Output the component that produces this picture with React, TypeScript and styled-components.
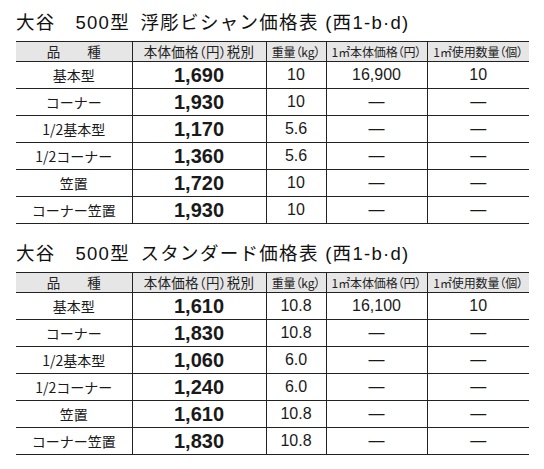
import styled, { createGlobalStyle } from "styled-components";

const GlobalStyle = createGlobalStyle`
  body {
    margin: 0;
    background: #ffffff;
    color: #1a1a1a;
    font-family: "Liberation Sans", "Noto Sans CJK JP", sans-serif;
  }
`;

type Row = {
  name: string;
  price: string;
  weight: string;
  m2Price: string;
  m2Count: string;
};

const relief: Row[] = [
  { name: "基本型", price: "1,690", weight: "10", m2Price: "16,900", m2Count: "10" },
  { name: "コーナー", price: "1,930", weight: "10", m2Price: "—", m2Count: "—" },
  { name: "1/2基本型", price: "1,170", weight: "5.6", m2Price: "—", m2Count: "—" },
  { name: "1/2コーナー", price: "1,360", weight: "5.6", m2Price: "—", m2Count: "—" },
  { name: "笠置", price: "1,720", weight: "10", m2Price: "—", m2Count: "—" },
  { name: "コーナー笠置", price: "1,930", weight: "10", m2Price: "—", m2Count: "—" },
];

const standard: Row[] = [
  { name: "基本型", price: "1,610", weight: "10.8", m2Price: "16,100", m2Count: "10" },
  { name: "コーナー", price: "1,830", weight: "10.8", m2Price: "—", m2Count: "—" },
  { name: "1/2基本型", price: "1,060", weight: "6.0", m2Price: "—", m2Count: "—" },
  { name: "1/2コーナー", price: "1,240", weight: "6.0", m2Price: "—", m2Count: "—" },
  { name: "笠置", price: "1,610", weight: "10.8", m2Price: "—", m2Count: "—" },
  { name: "コーナー笠置", price: "1,830", weight: "10.8", m2Price: "—", m2Count: "—" },
];

const Page = styled.div`
  display: flex;
  flex-direction: column;
  gap: 17px;
  padding: 10px 15px 0 16px;
`;

const Section = styled.section`
  display: flex;
  flex-direction: column;
`;

const Title = styled.h2`
  margin: 0;
  height: 31px;
  font-family: "Liberation Sans", "Noto Sans CJK JP", sans-serif;
  font-weight: 400;
  font-size: 18.5px;
  letter-spacing: 1.3px;
  line-height: 26px;
  color: #111;
  white-space: pre;
`;

const Table = styled.table`
  width: 513px;
  border-collapse: collapse;
  table-layout: fixed;
  border-top: 1.5px solid #222;
  border-bottom: 1px solid #222;
`;

const Head = styled.th<{ $tight?: boolean }>`
  height: 19px;
  padding: 0;
  background: #e6e6e6;
  font-family: "Noto Sans CJK JP", sans-serif;
  font-feature-settings: "palt";
  font-weight: 400;
  font-size: ${(p) => (p.$tight ? "12px" : "13.5px")};
  letter-spacing: ${(p) => (p.$tight ? "-0.1px" : "0.3px")};
  line-height: 19px;
  white-space: nowrap;
  text-align: center;
  color: #222;
  border-bottom: 1px solid #222;
  border-left: 1px solid #222;
  &:first-child {
    border-left: none;
    font-feature-settings: normal;
    letter-spacing: 0;
  }
`;

const Cell = styled.td<{ $kind?: "name" | "price" | "num" }>`
  height: 26px;
  padding: 0;
  text-align: center;
  white-space: nowrap;
  color: #1a1a1a;
  border-top: 1px solid #222;
  border-left: 1px solid #222;
  font-family: ${(p) =>
    p.$kind === "name"
      ? `"Noto Sans CJK JP", sans-serif`
      : `"Liberation Sans", Arial, sans-serif`};
  font-size: ${(p) => (p.$kind === "price" ? "20px" : p.$kind === "name" ? "14px" : "16px")};
  font-weight: ${(p) => (p.$kind === "price" ? 700 : 400)};
  line-height: 26px;
  &:first-child {
    border-left: none;
  }
`;

const PriceTable = ({ title, rows }: { title: string; rows: Row[] }) => (
  <Section>
    <Title>{title}</Title>
    <Table>
      <colgroup>
        <col style={{ width: 116 }} />
        <col style={{ width: 134 }} />
        <col style={{ width: 60 }} />
        <col style={{ width: 101 }} />
        <col style={{ width: 102 }} />
      </colgroup>
      <thead>
        <tr>
          <Head>品　　種</Head>
          <Head>本体価格（円）税別</Head>
          <Head $tight>重量（kg）</Head>
          <Head $tight>1㎡本体価格（円）</Head>
          <Head $tight>1㎡使用数量（個）</Head>
        </tr>
      </thead>
      <tbody>
        {rows.map((r) => (
          <tr key={r.name}>
            <Cell $kind="name">{r.name}</Cell>
            <Cell $kind="price">{r.price}</Cell>
            <Cell $kind="num">{r.weight}</Cell>
            <Cell $kind="num">{r.m2Price}</Cell>
            <Cell $kind="num">{r.m2Count}</Cell>
          </tr>
        ))}
      </tbody>
    </Table>
  </Section>
);

export default function App() {
  return (
    <>
      <GlobalStyle />
      <Page>
        <PriceTable title={"大谷　500型\u2002浮彫ビシャン価格表 (西1-b·d)"} rows={relief} />
        <PriceTable title={"大谷　500型\u2002スタンダード価格表 (西1-b·d)"} rows={standard} />
      </Page>
    </>
  );
}
